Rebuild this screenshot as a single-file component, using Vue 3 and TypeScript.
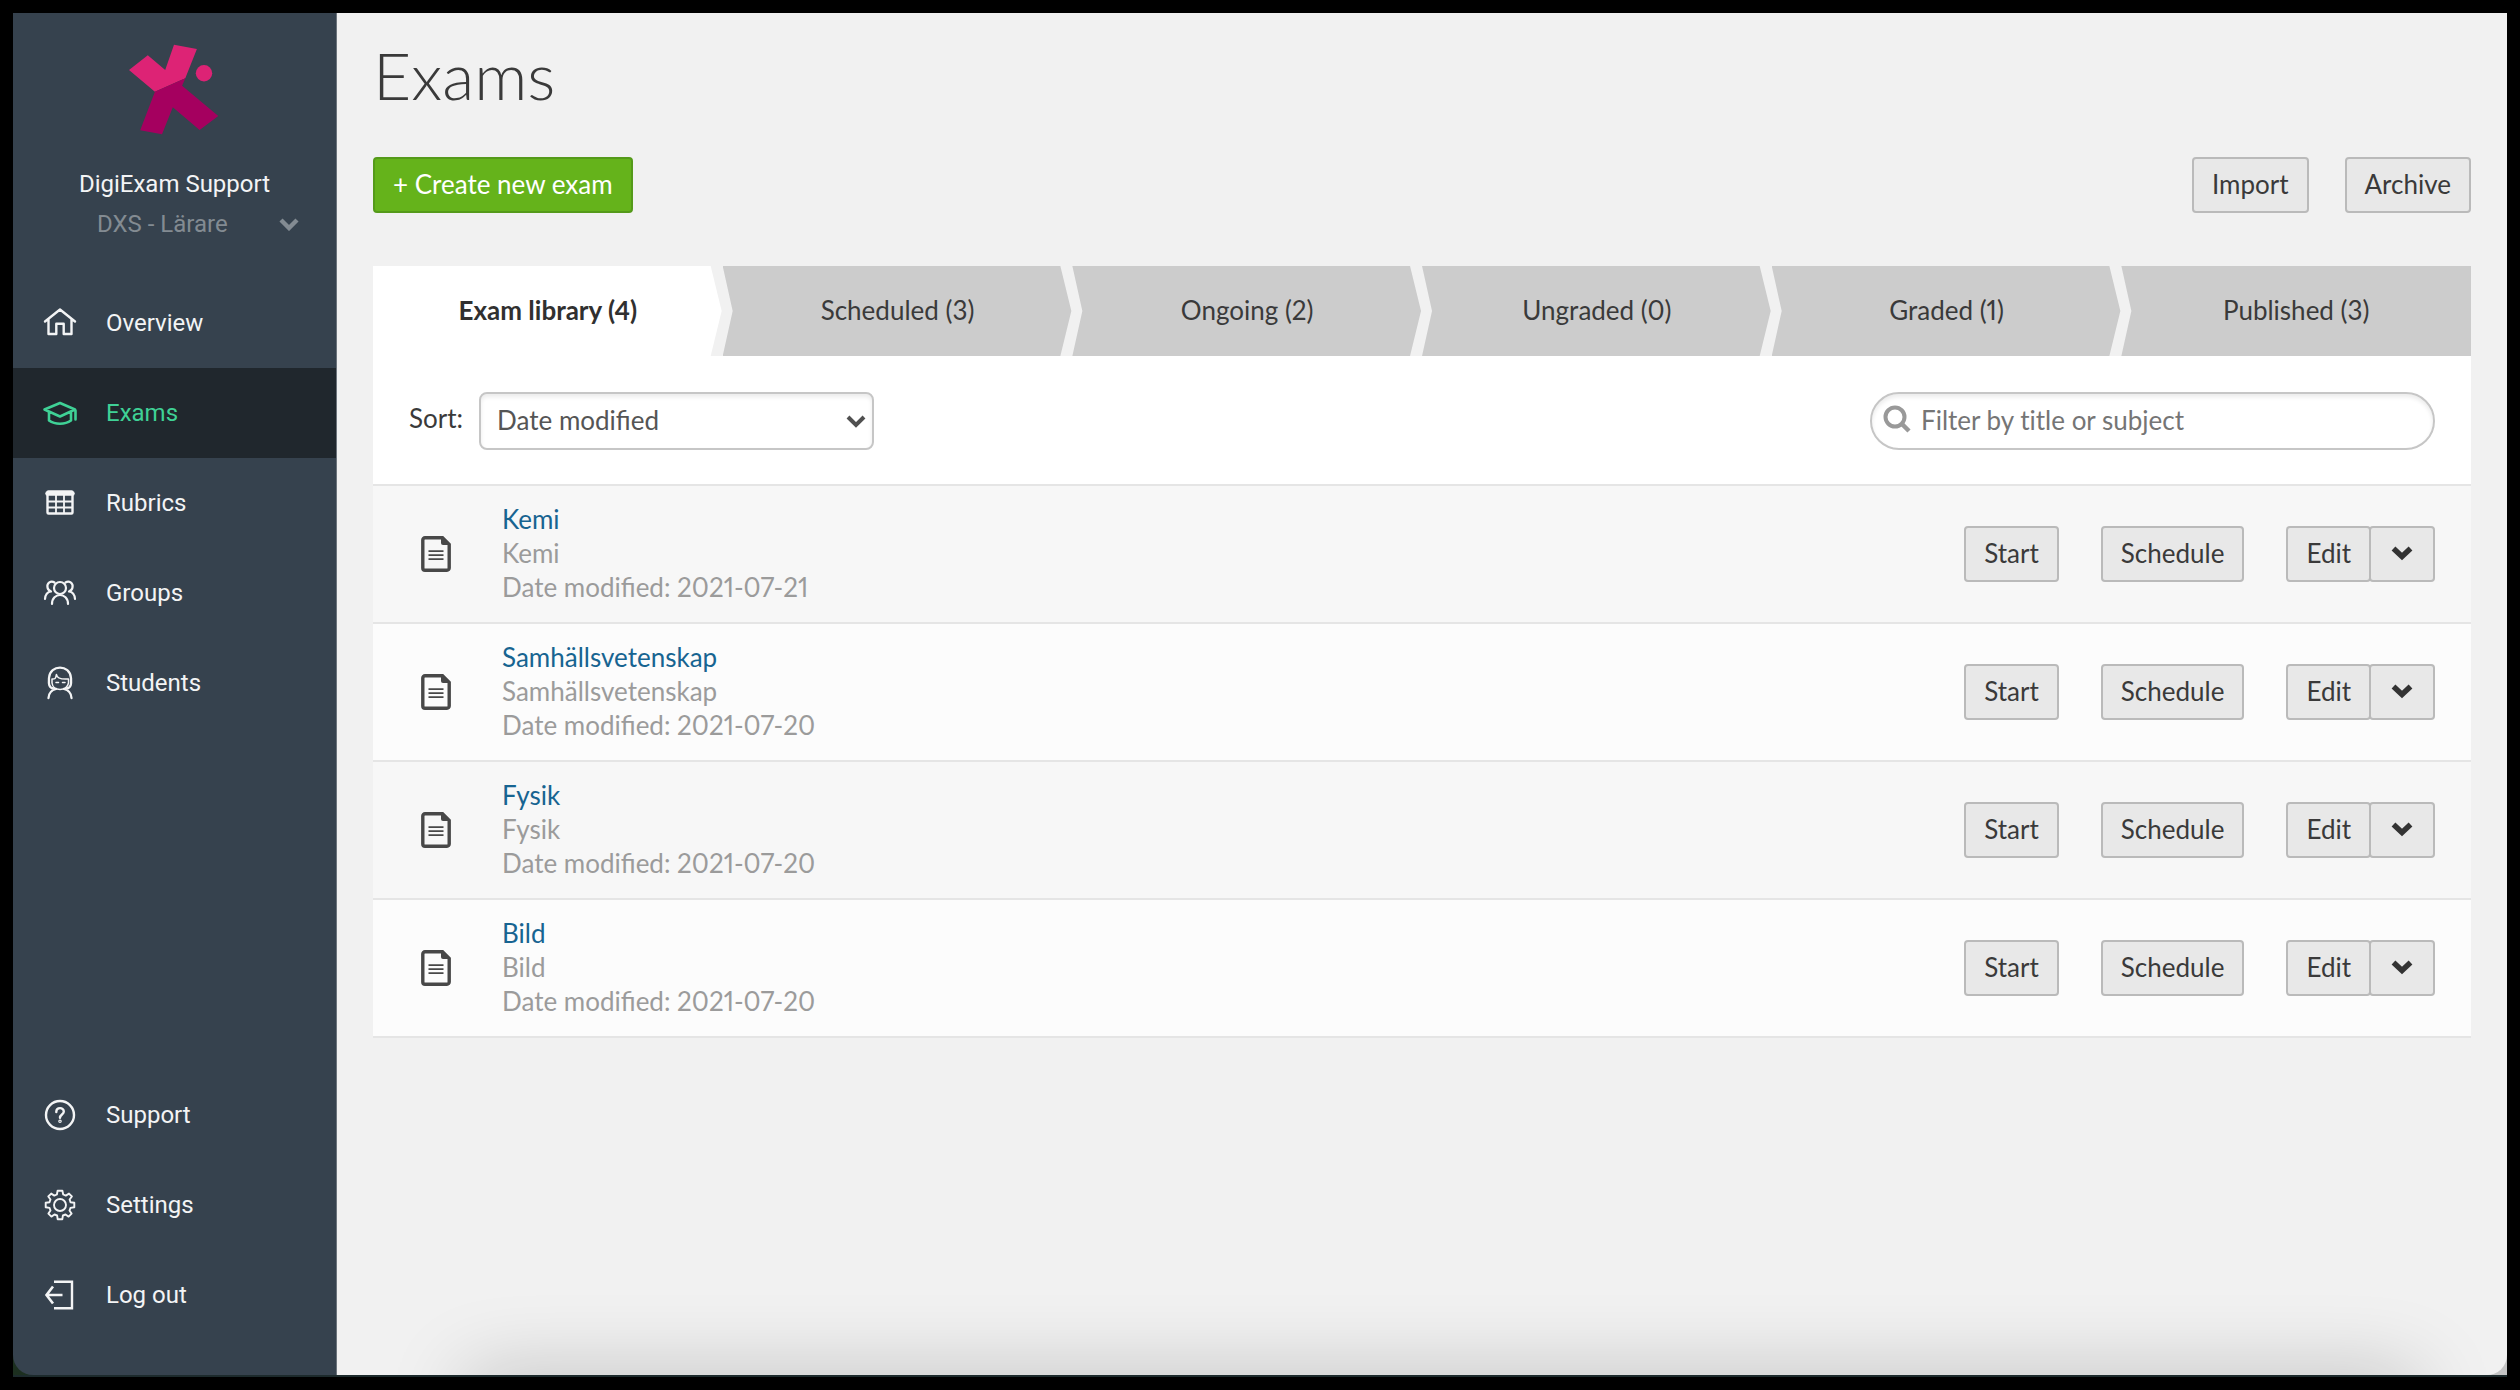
<script setup lang="ts">
import { ref } from 'vue'

interface NavItem {
  label: string
  icon: string
}

interface Exam {
  title: string
  subject: string
  modified: string
}

const primaryNav: NavItem[] = [
  { label: 'Overview', icon: 'home' },
  { label: 'Exams', icon: 'cap' },
  { label: 'Rubrics', icon: 'table' },
  { label: 'Groups', icon: 'groups' },
  { label: 'Students', icon: 'student' },
]

const secondaryNav: NavItem[] = [
  { label: 'Support', icon: 'help' },
  { label: 'Settings', icon: 'gear' },
  { label: 'Log out', icon: 'logout' },
]

const activeNav = ref('Exams')

const tabs = ref([
  { name: 'Exam library', count: 4 },
  { name: 'Scheduled', count: 3 },
  { name: 'Ongoing', count: 2 },
  { name: 'Ungraded', count: 0 },
  { name: 'Graded', count: 1 },
  { name: 'Published', count: 3 },
])
const activeTab = ref('Exam library')

const sortBy = ref('modified')
const filter = ref('')

const exams: Exam[] = [
  { title: 'Kemi', subject: 'Kemi', modified: '2021-07-21' },
  { title: 'Samhällsvetenskap', subject: 'Samhällsvetenskap', modified: '2021-07-20' },
  { title: 'Fysik', subject: 'Fysik', modified: '2021-07-20' },
  { title: 'Bild', subject: 'Bild', modified: '2021-07-20' },
]
</script>

<template>
  <div class="desktop">
    <div class="window">
      <aside class="sidebar">
        <svg class="logo" viewBox="128 44 92 92" aria-hidden="true">
          <path fill="#dd2375" d="M174 44.7 196.9 49 185.3 78.3 154.9 91.7 129 70 147.8 55.3 165.2 70Z" />
          <path fill="#a5005f" d="M185.3 78.3 182.1 85.7 218.3 116 199.6 130 172.8 107.3 162 134.3 140.2 130.3 154.9 91.7Z" />
          <circle fill="#dd2375" cx="204" cy="73.2" r="8.2" />
        </svg>
        <p class="user">DigiExam Support</p>
        <button class="account" type="button">
          <span>DXS - Lärare</span>
          <svg class="account-arrow" viewBox="0 0 20 14" aria-hidden="true">
            <path d="M2 3 10 11 18 3" fill="none" stroke="currentColor" stroke-width="4.4" />
          </svg>
        </button>

        <nav v-for="(group, g) in [primaryNav, secondaryNav]" :key="g" :class="['nav', g ? 'nav-bottom' : '']">
          <a
            v-for="item in group"
            :key="item.label"
            href="#"
            :class="['nav-item', { active: item.label === activeNav }]"
            @click.prevent="activeNav = item.label"
          >
            <svg class="nav-icon" viewBox="0 0 36 36" fill="none" stroke="currentColor" stroke-width="2.4" stroke-linecap="round" stroke-linejoin="round" aria-hidden="true">
              <g v-if="item.icon === 'home'">
                <path d="M3 16.5 18 4.500 33 16.500M6.500 14.500V29H14.300V18.800H21.700V29H29.500V14.500" />
              </g>
              <g v-else-if="item.icon === 'cap'" stroke-width="2.600">
                <path d="M2.500 14.500 18 8 33 14.500 18 21.500ZM7 17.500V25.500C13 29.800 23 29.800 29 25.500V17.500M33.500 15.500V24.500" />
              </g>
              <g v-else-if="item.icon === 'table'" stroke-width="1.800">
                <rect x="5.500" y="6.500" width="25" height="22" rx="1" stroke-width="2.400" />
                <path d="M5.500 8.500H30.500" stroke-width="4.500" />
                <path d="M14 10V28M22 10V28M6 16.500H30M6 22.500H30" />
              </g>
              <g v-else-if="item.icon === 'groups'" stroke-width="2.200">
                <circle cx="18" cy="13" r="6" />
                <path d="M10 29C10 17 26 17 26 29M12.500 7.500C9 5 4.500 8 5.500 12.500 5.800 14.500 7 15.500 9 16.500 5 17 3.300 20 3 24M23.500 7.500C27 5 31.500 8 30.500 12.500 30.200 14.500 29 15.500 27 16.500 31 17 32.700 20 33 24" />
              </g>
              <g v-else-if="item.icon === 'student'" stroke-width="2.300">
                <path d="M12 23.500C6 23.500 6.800 17 7 13 8 -.8 28 -.8 29 13 29.200 17 30 23.500 24 23.500M6.500 33C6.800 27.500 9.500 25 14 24M22 24C26.500 25 29.200 27.500 29.500 33" />
                <path d="M10 14C15 14.500 13.500 11 14.500 9.500 15 13.500 20 14.500 26.500 14V18C25 26.500 11 26.500 10 18ZM14 17.500H16.500M20.500 17.500H23" stroke-width="1.500" />
              </g>
              <g v-else-if="item.icon === 'help'">
                <circle cx="18" cy="18" r="14" />
                <path d="M14.300 15C14.300 9.800 22 10 21.800 14.800 21.700 17.600 18 17.600 18 20.800" />
                <circle cx="18" cy="24.300" r=".6" />
              </g>
              <g v-else-if="item.icon === 'gear'" stroke-width="1.900">
                <circle cx="18" cy="18" r="6" />
                <path d="M15.600 3.800H20.400L21.200 7.500 23.800 8.600 27 6.600 29.900 9.500 27.600 12.500 28.500 15.200 32.300 15.800V20.200L28.500 20.900 27.500 23.500 29.600 26.600 26.600 29.600 23.500 27.500 20.900 28.500 20.300 32.300H15.700L15.100 28.500 12.500 27.500 9.400 29.600 6.400 26.600 8.500 23.500 7.500 20.900 3.700 20.200V15.800L7.500 15.200 8.500 12.500 6.300 9.500 9.200 6.600 12.300 8.600 14.900 7.500Z" />
              </g>
              <g v-else stroke-linecap="butt" stroke-linejoin="miter">
                <path d="M12 4.800H30V31.200H12" />
                <path d="M20.500 18H4.500M11 9.500 4.500 18 11 26.500" stroke-width="2.600" />
              </g>
            </svg>
            <span>{{ item.label }}</span>
          </a>
        </nav>
      </aside>

      <main class="content">
        <h1>Exams</h1>

        <div class="actions">
          <button class="btn btn-primary" type="button">+ Create new exam</button>
          <div class="actions-right">
            <button class="btn" type="button">Import</button>
            <button class="btn" type="button">Archive</button>
          </div>
        </div>

        <div class="tabs" role="tablist">
          <button
            v-for="tab in tabs"
            :key="tab.name"
            type="button"
            role="tab"
            :aria-selected="tab.name === activeTab"
            :class="['tab', { selected: tab.name === activeTab }]"
            @click="activeTab = tab.name"
          >
            {{ tab.name }} ({{ tab.count }})
          </button>
        </div>

        <section class="panel">
          <div class="toolbar">
            <label class="sort-label" for="sort">Sort:</label>
            <div class="select-wrap">
              <select id="sort" v-model="sortBy">
                <option value="modified">Date modified</option>
                <option value="title">Title</option>
              </select>
              <svg class="select-arrow" viewBox="0 0 20 14" aria-hidden="true">
                <path d="M2 3 10 11 18 3" fill="none" stroke="currentColor" stroke-width="4" />
              </svg>
            </div>
            <label class="search">
              <svg class="search-icon" viewBox="0 0 28 28" aria-hidden="true">
                <circle cx="12" cy="12" r="9.500" fill="none" stroke="#999" stroke-width="4" />
                <path d="M18.500 18.500 26 26" stroke="#999" stroke-width="4.500" />
              </svg>
              <input v-model="filter" type="text" placeholder="Filter by title or subject" aria-label="Filter by title or subject" />
            </label>
          </div>

          <ul class="exams">
            <li v-for="exam in exams" :key="exam.title" class="exam">
              <svg class="doc" viewBox="0 0 30 36" aria-hidden="true">
                <path d="M4 1.800H21.500L28.200 8.500V32A2.200 2.200 0 0 1 26 34.200H4A2.200 2.200 0 0 1 1.800 32V4A2.200 2.200 0 0 1 4 1.800Z" fill="none" stroke="#484848" stroke-width="3.400" />
                <path d="M20 1H22L29 8V9H22A2 2 0 0 1 20 7Z" fill="#484848" />
                <path d="M7.500 15.200H22.500M7.500 19.200H22.500M7.500 23.200H22.500" stroke="#484848" stroke-width="1.800" />
              </svg>
              <div class="info">
                <a href="#">{{ exam.title }}</a>
                <span>{{ exam.subject }}</span>
                <span>Date modified: {{ exam.modified }}</span>
              </div>
              <div class="row-actions">
                <button class="btn" type="button">Start</button>
                <button class="btn" type="button">Schedule</button>
                <div class="split">
                  <button class="btn" type="button">Edit</button>
                  <button class="btn btn-more" type="button" aria-label="More actions">
                    <svg viewBox="0 0 22 16" aria-hidden="true">
                      <path d="M2.500 3.500 11 11.500 19.500 3.500" fill="none" stroke="#333" stroke-width="5.500" />
                    </svg>
                  </button>
                </div>
              </div>
            </li>
          </ul>
        </section>
      </main>
    </div>
  </div>
</template>

<style>
body {
  margin: 0;
  background: #000;
}
</style>

<style scoped>
* {
  box-sizing: border-box;
}

.desktop {
  min-height: 100vh;
  display: flex;
  padding: 13px;
  background: #000;
  font-family: Lato, "Open Sans", sans-serif;
  font-size: 26px;
  font-variant-numeric: proportional-nums;
  color: #3a3a3a;
}

.window {
  flex: 1;
  display: flex;
  border-bottom: 2px solid #1c2a2c;
  background: linear-gradient(90deg, #1c2f1f, #1b3a52 30%, #c4c4c4 90%);
}

.sidebar {
  flex: none;
  width: 324px;
  display: flex;
  flex-direction: column;
  padding-bottom: 35px;
  border-radius: 0 0 0 20px;
  border-right: 1px solid #6c747c;
  background: #36424e;
  color: #f3f4f5;
  font-family: Roboto, "Open Sans", sans-serif;
  font-size: 24px;
}

.logo {
  flex: none;
  width: 92px;
  height: 92px;
  margin: 31px 0 0 115px;
}

.user {
  margin: 28px 0 0;
  line-height: 40px;
  text-align: center;
}

.account {
  display: flex;
  align-items: center;
  justify-content: space-between;
  height: 40px;
  margin: 0 37px 34px 84px;
  padding: 0;
  border: 0;
  background: none;
  color: #838b92;
  font: inherit;
}

.account-arrow {
  width: 20px;
  height: 14px;
}

.nav-bottom {
  margin-top: auto;
}

.nav-item {
  display: flex;
  align-items: center;
  gap: 28px;
  height: 90px;
  padding-left: 29px;
  color: inherit;
  text-decoration: none;
}

.nav-item.active {
  background: #20272d;
  color: #3fd196;
}

.nav-icon {
  width: 36px;
  height: 36px;
}

.content {
  position: relative;
  flex: 1;
  min-width: 0;
  overflow: hidden;
  padding: 20px 36px 40px;
  border-radius: 0 0 20px 0;
  background: #f1f1f1;
}

/* soft shade rising from the lower edge */
.content::after {
  content: "";
  position: absolute;
  left: 130px;
  right: 90px;
  bottom: -60px;
  height: 60px;
  box-shadow: 0 0 80px rgba(0, 0, 0, 0.22);
}

h1 {
  margin: 0;
  font-size: 66px;
  font-weight: 300;
  line-height: 84px;
}

.actions,
.actions-right {
  display: flex;
  justify-content: space-between;
}

.actions {
  margin: 40px 0 53px;
}

.actions-right {
  gap: 36px;
}

.btn {
  height: 56px;
  padding: 0 18px 2px;
  border: 2px solid #bababa;
  border-radius: 4px;
  background: #e8e8e8;
  color: #3a3a3a;
  font: inherit;
}

.btn-primary {
  border-color: #559a1a;
  background: #65b31b;
  color: #fff;
}

.tabs {
  display: flex;
}

.tab {
  flex: 1;
  height: 90px;
  padding: 0 0 3px;
  border: 0;
  background: #ccc;
  color: #3a3a3a;
  font: inherit;
  clip-path: polygon(0 0, calc(100% - 12px) 0, calc(100% - 1px) 50%, calc(100% - 12px) 100%, 0 100%, 10px 50%);
}

.tab:first-child {
  clip-path: polygon(0 0, calc(100% - 12px) 0, calc(100% - 1px) 50%, calc(100% - 12px) 100%, 0 100%);
}

.tab:last-child {
  clip-path: polygon(0 0, 100% 0, 100% 100%, 0 100%, 10px 50%);
}

.tab.selected {
  background: #fff;
  color: #303030;
  font-weight: 700;
}

.panel {
  background: #fff;
}

.toolbar {
  display: flex;
  align-items: center;
  height: 128px;
  padding: 2px 36px 0;
}

.sort-label {
  margin-right: 16px;
  padding-bottom: 6px;
}

.select-wrap,
.search {
  position: relative;
  height: 58px;
}

.select-wrap {
  width: 395px;
}

select,
input {
  width: 100%;
  height: 100%;
  border: 2px solid #c6c6c6;
  background: #fff;
  box-shadow: inset 0 3px 4px rgba(0, 0, 0, 0.08);
  color: #555;
  font: inherit;
}

select {
  appearance: none;
  padding: 0 48px 2px 16px;
  border-radius: 8px;
}

.select-arrow {
  position: absolute;
  right: 8px;
  top: 22px;
  width: 20px;
  height: 14px;
  color: #505050;
  pointer-events: none;
}

.search {
  width: 565px;
  margin-left: auto;
}

.search-icon {
  position: absolute;
  left: 13px;
  top: 13px;
  width: 28px;
  height: 28px;
}

input {
  padding: 0 24px 2px 49px;
  border-radius: 29px;
  font-variant-ligatures: none;
}

input::placeholder {
  color: #757575;
  opacity: 1;
}

.exams {
  margin: 0;
  padding: 0;
  border-bottom: 2px solid #e5e5e5;
  list-style: none;
}

.exam {
  display: flex;
  align-items: center;
  height: 138px;
  padding: 0 36px 0 48px;
  border-top: 2px solid #e5e5e5;
  background: #f7f7f7;
}

.exam:nth-child(even) {
  background: #fcfcfc;
}

.doc {
  width: 30px;
  height: 36px;
  margin-right: 51px;
}

.info {
  display: flex;
  flex-direction: column;
  align-items: flex-start;
  padding-bottom: 2px;
  line-height: 34px;
  color: #9b9b9b;
}

.info a {
  color: #176491;
  text-decoration: none;
}

.row-actions {
  display: flex;
  gap: 42px;
  margin-left: auto;
}

.split {
  display: flex;
}

.btn-more {
  display: flex;
  align-items: center;
  justify-content: center;
  width: 66px;
  margin-left: -2px;
}

.btn-more svg {
  width: 22px;
  height: 16px;
}
</style>
